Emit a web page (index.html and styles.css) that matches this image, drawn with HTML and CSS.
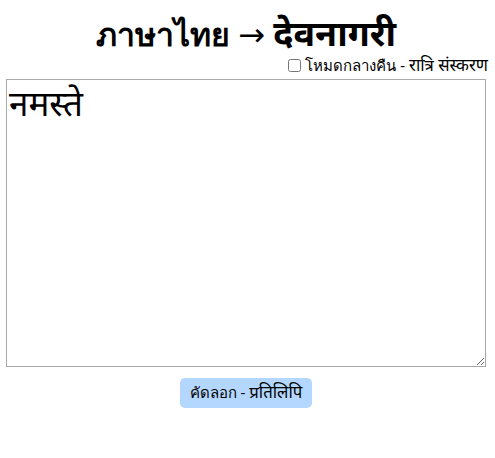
FILE: index.html
```html
<!DOCTYPE html>
<html>
<head>
<meta charset="utf-8">
<link rel="stylesheet" href="styles.css">
</head>
<body>
<div class="page">
  <h1 class="title">ภาษาไทย <span class="arrow">→</span> <span class="deva">देवनागरी</span></h1>
  <div class="mode">
    <label class="mode-label"><input type="checkbox" class="mode-check"> โหมดกลางคืน - <span class="deva">रात्रि संस्करण</span></label>
  </div>
  <textarea class="editor">नमस्ते</textarea>
  <div class="actions">
    <button class="copy-btn">คัดลอก - <span class="deva">प्रतिलिपि</span></button>
  </div>
</div>
</body>
</html>
```
FILE: styles.css
```css
html, body {
  margin: 0;
  padding: 0;
  background: #fff;
}
body {
  font-family: "Noto Sans", "DejaVu Sans", sans-serif;
  color: #000;
}
.page {
  padding: 0 9px 0 6px;
}
.title {
  margin: 14px 0 0 0;
  text-align: center;
  font-size: 32px;
  font-weight: bold;
  line-height: 40px;
}
.arrow {
  font-weight: normal;
}
.deva {
  font-size: 1.12em;
  line-height: 1;
}
.mode {
  display: flex;
  justify-content: flex-end;
  height: 23px;
  align-items: center;
  font-size: 15px;
}
.mode-label {
  display: flex;
  align-items: center;
  gap: 4px;
  margin-right: -2px;
}
.mode-check {
  margin: 0;
  width: 13px;
  height: 13px;
}
.editor {
  display: block;
  box-sizing: border-box;
  width: 480px;
  height: 288px;
  margin: 2px 0 0 0;
  border: 1px solid #a9a9a9;
  padding: 2px;
  font-family: "Noto Sans", "DejaVu Sans", sans-serif;
  font-size: 35px;
  line-height: 1.2;
  resize: both;
}
.actions {
  display: flex;
  justify-content: center;
  margin-top: 11px;
}
.copy-btn {
  background: #b3d7ff;
  border: none;
  border-radius: 5px;
  padding: 0 10px;
  font-family: "Noto Sans", "DejaVu Sans", sans-serif;
  font-size: 15px;
  color: #000;
  height: 30px;
}
```
